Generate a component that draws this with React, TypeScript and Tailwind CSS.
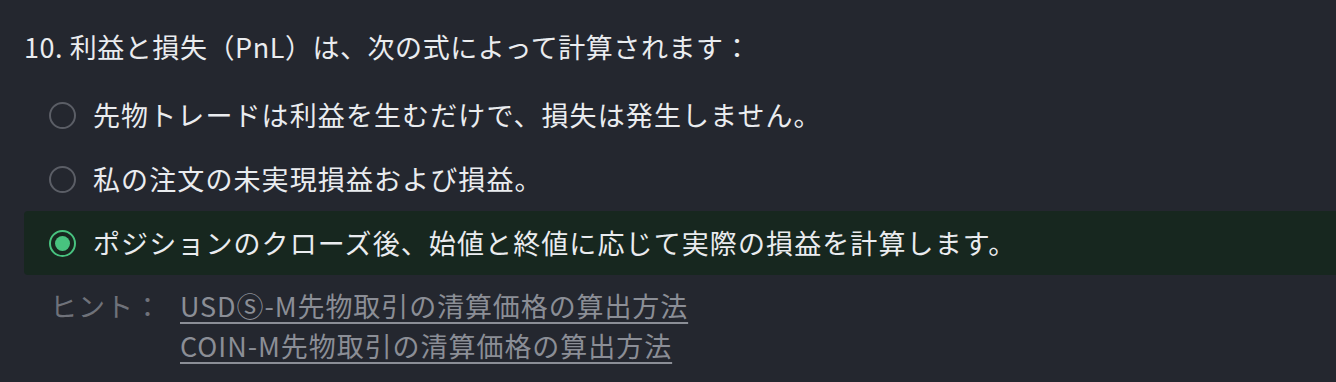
import React from "react";

const options = [
  "先物トレードは利益を生むだけで、損失は発生しません。",
  "私の注文の未実現損益および損益。",
  "ポジションのクローズ後、始値と終値に応じて実際の損益を計算します。",
];

export default function App() {
  return (
    <div
      className="w-[1336px] h-[382px] bg-[#24272f] pl-[24px] pt-[27px] overflow-hidden"
      style={{ fontFamily: '"Noto Sans CJK JP", "Noto Sans", sans-serif' }}
    >
      <div className="h-[40px] flex items-center text-[27px] text-[#eaecef] tracking-[0.55px]">
        10. 利益と損失（PnL）は、次の式によって計算されます：
      </div>
      <div className="mt-[16px] flex flex-col">
        {options.map((o, i) => {
          const sel = i === 2;
          return (
            <div
              key={i}
              className={
                "h-[64px] flex items-center pl-[25px] gap-[17px] rounded-l-[4px] " +
                (sel ? "bg-[#17271f]" : "")
              }
            >
              {sel ? (
                <div className="w-[27px] h-[27px] rounded-full border-[2px] border-[#48c27f] flex items-center justify-center">
                  <div className="w-[15px] h-[15px] rounded-full bg-[#48c27f]" />
                </div>
              ) : (
                <div className="w-[27px] h-[27px] rounded-full border-[2px] border-[#5b5e66]" />
              )}
              <span className="text-[27px] text-[#eaecef] tracking-[1.1px]">{o}</span>
            </div>
          );
        })}
      </div>
      <div className="mt-[11px] flex pl-[26px] text-[27px]">
        <div className="w-[130px] h-[40px] flex items-center text-[#6f727a] tracking-[1px]">
          ヒント：
        </div>
        <div className="flex flex-col text-[#8b8e96]">
          <a className="h-[40px] flex items-center underline underline-offset-[5px] decoration-[1.5px] tracking-[0.9px]">
            USDⓈ-M先物取引の清算価格の算出方法
          </a>
          <a className="h-[40px] flex items-center underline underline-offset-[5px] decoration-[1.5px] tracking-[0.95px]">
            COIN-M先物取引の清算価格の算出方法
          </a>
        </div>
      </div>
    </div>
  );
}
